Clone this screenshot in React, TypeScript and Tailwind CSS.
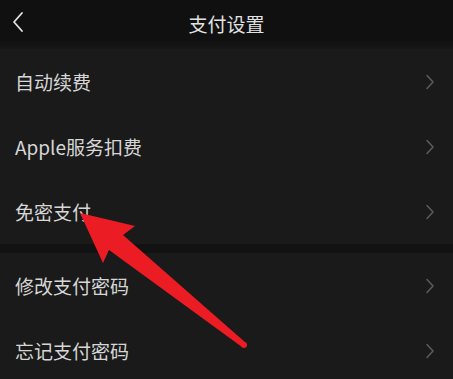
const groups = [
  ['自动续费', 'Apple服务扣费', '免密支付'],
  ['修改支付密码', '忘记支付密码'],
];

const Chevron = () => (
  <svg width="10" height="16" viewBox="0 0 10 16" className="text-[#5c5c5c]">
    <polyline points="2,1.5 8,8 2,14.5" fill="none" stroke="currentColor" strokeWidth="1.5" strokeLinecap="round" strokeLinejoin="round" />
  </svg>
);

const Row = ({ label }: { label: string }) => (
  <div className="flex h-[65px] items-center justify-between pl-[15px] pr-[18px]">
    <span className="text-[19px] leading-none text-[#d6d6d6]">{label}</span>
    <Chevron />
  </div>
);

// red annotation arrow pointing at 免密支付
const Arrow = () => (
  <svg className="pointer-events-none absolute left-0 top-0" width="453" height="379" viewBox="0 0 453 379">
    <polygon
      points="80,213 135,226 123,235 246,343 242,347 109,250 103,263"
      fill="#ec1c24"
    />
    <circle cx="244" cy="345" r="3" fill="#ec1c24" />
  </svg>
);

export default function App() {
  return (
    <div
      className="relative h-[379px] w-[453px] overflow-hidden bg-[#1a1a1a]"
      style={{ fontFamily: '"Noto Sans CJK SC", "Noto Sans", sans-serif' }}
    >
      <div className="relative flex h-[49px] items-center justify-center bg-gradient-to-b from-[#101010] from-80% to-[#171717]">
        <svg width="14" height="22" viewBox="0 0 14 22" className="absolute left-[11px] top-[11px] text-[#e4e4e4]">
          <polyline points="11,2 3,11 11,20" fill="none" stroke="currentColor" strokeWidth="1.8" strokeLinecap="round" strokeLinejoin="round" />
        </svg>
        <span className="text-[19px] text-[#e2e2e2]">支付设置</span>
      </div>
      {groups.map((items, i) => (
        <div key={i} className={i > 0 ? 'border-t-[9px] border-[#121212]' : ''}>
          {items.map((label) => (
            <Row key={label} label={label} />
          ))}
        </div>
      ))}
      <Arrow />
    </div>
  );
}
